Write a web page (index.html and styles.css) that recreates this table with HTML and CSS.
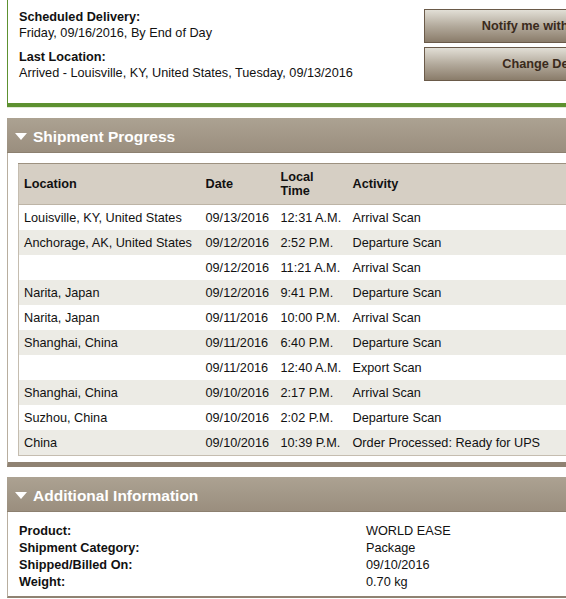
FILE: index.html
```html
<!DOCTYPE html>
<html>
<head>
<meta charset="utf-8">
<link rel="stylesheet" href="styles.css">
</head>
<body>
<div class="page">
  <div class="summary">
    <div class="summary-info">
      <div class="group">
        <div class="label">Scheduled Delivery:</div>
        <div>Friday, 09/16/2016, By End of Day</div>
      </div>
      <div class="group">
        <div class="label">Last Location:</div>
        <div>Arrived - Louisville, KY, United States, Tuesday, 09/13/2016</div>
      </div>
    </div>
    <div class="actions">
      <button class="btn">Notify me with Updates</button>
      <button class="btn">Change Delivery</button>
    </div>
  </div>

  <div class="section">
    <div class="section-head"><span class="tri"></span>Shipment Progress</div>
    <div class="section-body progress-body">
      <table class="progress">
        <colgroup>
          <col class="c-loc"><col class="c-date"><col class="c-time"><col>
        </colgroup>
        <thead>
          <tr><th>Location</th><th>Date</th><th>Local<br>Time</th><th>Activity</th></tr>
        </thead>
        <tbody>
          <tr><td>Louisville, KY, United States</td><td>09/13/2016</td><td>12:31 A.M.</td><td>Arrival Scan</td></tr>
          <tr><td>Anchorage, AK, United States</td><td>09/12/2016</td><td>2:52 P.M.</td><td>Departure Scan</td></tr>
          <tr><td></td><td>09/12/2016</td><td>11:21 A.M.</td><td>Arrival Scan</td></tr>
          <tr><td>Narita, Japan</td><td>09/12/2016</td><td>9:41 P.M.</td><td>Departure Scan</td></tr>
          <tr><td>Narita, Japan</td><td>09/11/2016</td><td>10:00 P.M.</td><td>Arrival Scan</td></tr>
          <tr><td>Shanghai, China</td><td>09/11/2016</td><td>6:40 P.M.</td><td>Departure Scan</td></tr>
          <tr><td></td><td>09/11/2016</td><td>12:40 A.M.</td><td>Export Scan</td></tr>
          <tr><td>Shanghai, China</td><td>09/10/2016</td><td>2:17 P.M.</td><td>Arrival Scan</td></tr>
          <tr><td>Suzhou, China</td><td>09/10/2016</td><td>2:02 P.M.</td><td>Departure Scan</td></tr>
          <tr><td>China</td><td>09/10/2016</td><td>10:39 P.M.</td><td>Order Processed: Ready for UPS</td></tr>
        </tbody>
      </table>
    </div>
  </div>

  <div class="section">
    <div class="section-head"><span class="tri"></span>Additional Information</div>
    <div class="section-body info-body">
      <div class="info-row"><span class="label">Product:</span><span>WORLD EASE</span></div>
      <div class="info-row"><span class="label">Shipment Category:</span><span>Package</span></div>
      <div class="info-row"><span class="label">Shipped/Billed On:</span><span>09/10/2016</span></div>
      <div class="info-row"><span class="label">Weight:</span><span>0.70 kg</span></div>
    </div>
  </div>
</div>
</body>
</html>
```

FILE: styles.css
```css
html, body {
  margin: 0;
  padding: 0;
  overflow: hidden;
  background: #fff;
}
body {
  font-family: "Liberation Sans", Arial, Helvetica, sans-serif;
  font-size: 12.7px;
  color: #111;
}
.page {
  width: 700px;
  padding-left: 7px;
}
.label {
  font-weight: bold;
}
.summary {
  display: grid;
  grid-template-columns: 1fr 262px;
  padding: 9px 21px 22px 11px;
  border-left: 1px solid #5d9130;
  border-bottom: 4px solid #5d9130;
  box-shadow: 0 1px 0 #dfe9d5;
}
.summary-info {
  line-height: 16px;
}
.group + .group {
  margin-top: 8px;
}
.actions {
  display: flex;
  flex-direction: column;
  gap: 4px;
}
.btn {
  height: 34px;
  border: 1px solid #6a5a49;
  background: linear-gradient(#e2dfd6, #b3aa9c 50%, #8a7c6a);
  color: #3a2a1c;
  font-family: "Liberation Sans", Arial, sans-serif;
  font-weight: bold;
  font-size: 12.7px;
  text-align: center;
  padding: 0 6px 0 0;
}
.section {
  margin-top: 11px;
}
.section + .section {
  margin-top: 10px;
}
.section-head {
  height: 35px;
  display: flex;
  align-items: center;
  background: linear-gradient(#aca292, #9a8e7e);
  border-bottom: 1px solid #8c8070;
  box-sizing: border-box;
  color: #fff;
  font-weight: bold;
  font-size: 15.5px;
  padding: 3px 0 0 8px;
}
.tri {
  width: 0;
  height: 0;
  border-left: 6px solid transparent;
  border-right: 6px solid transparent;
  border-top: 7px solid #fff;
  margin-right: 6px;
}
.section-body {
  border-left: 1px solid #b8ae9f;
}
.progress-body {
  padding: 10px 0 6px 10px;
  border-bottom: 5px solid #8f8272;
}
.progress {
  border-collapse: collapse;
  table-layout: fixed;
  width: 682px;
  border-left: 1px solid #c5bdb0;
  border-bottom: 1px solid #c5bdb0;
}
.c-loc { width: 181px; }
.c-date { width: 75px; }
.c-time { width: 72px; }
.progress th {
  background: #d6cfc4;
  text-align: left;
  font-weight: bold;
  height: 41px;
  line-height: 14px;
  padding: 0 0 0 6px;
  border-top: 1px solid #9d9180;
  border-bottom: 1px solid #bdb4a6;
  box-sizing: border-box;
}
.progress th:first-child, .progress td:first-child {
  padding-left: 5px;
}
.progress td {
  height: 25px;
  padding: 0 0 0 6px;
  white-space: nowrap;
  line-height: 16px;
}
.progress tbody tr:nth-child(even) td {
  background: #ecebe5;
}
.info-body {
  padding: 11px 0 5px 11px;
  border-bottom: 2px solid #8f8272;
  line-height: 17px;
}
.info-row {
  display: grid;
  grid-template-columns: 347px 1fr;
}
```
